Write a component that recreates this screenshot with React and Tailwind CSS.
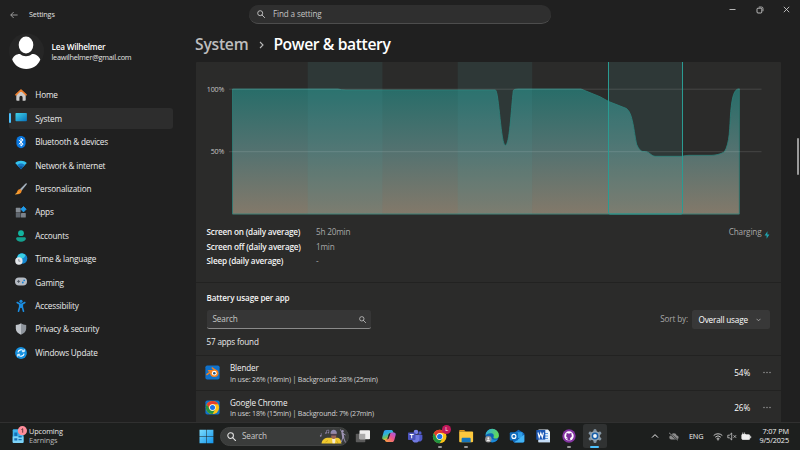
import React from "react";

const Svg = ({ w = 14, h = 14, children, className = "" }) => (
  <svg width={w} height={h} viewBox={`0 0 ${w} ${h}`} className={`block shrink-0 ${className}`} fill="none">
    {children}
  </svg>
);

const HomeIcon = () => (
  <Svg>
    <path d="M2.3 6.2 7 2l4.7 4.2V12a.8.8 0 0 1-.8.8H8.6V9.4a1.6 1.6 0 0 0-3.2 0v3.4H3.1a.8.8 0 0 1-.8-.8Z" fill="#c9c9c9" />
    <path d="M1.900 6.800 7 2l5.100 4.800" stroke="#ee7d2b" strokeWidth="1.600" strokeLinejoin="round" strokeLinecap="round" />
  </Svg>
);
const SystemIcon = () => (
  <Svg>
    <defs>
      <linearGradient id="sys" x1="0" y1="0" x2="1" y2="1">
        <stop stopColor="#41d3e8" />
        <stop offset="1" stopColor="#0873bd" />
      </linearGradient>
    </defs>
    <rect x="1.500" y="2" width="11.400" height="8.200" rx=".8" fill="url(#sys)" />
  </Svg>
);
const BluetoothIcon = () => (
  <Svg>
    <rect x="2.400" y="1" width="9.200" height="12.200" rx="4.600" fill="#0a78e0" />
    <path d="m4.800 4.900 4.300 4.300L7 11.100V3.200l2.100 1.900-4.300 4.200" stroke="#fff" strokeWidth="1" strokeLinejoin="round" />
  </Svg>
);
const NetworkIcon = () => (
  <Svg>
    <path d="M1.200 5.100C4.200 2 9.800 2 12.800 5.100L7 11.200Z" fill="#35c4ef" />
    <path d="M3 7C5.100 4.900 8.900 4.900 11 7l-4 4.200Z" fill="#1677c4" />
    <path d="M4.900 8.900C6 7.900 8 7.900 9.100 8.900L7 11.200Z" fill="#0c5494" />
  </Svg>
);
const BrushIcon = () => (
  <Svg>
    <path d="M12.600 1.200c.5.3.3.8 0 1.300L7.400 9 5.600 7.400l6-5.800c.3-.3.7-.6 1-.4Z" fill="#a4b0bd" />
    <path d="M5.500 7.300c1.500-.2 2.500 1 2 2.400-.6 2-3 2.700-6.200 2.500C3.600 11 2.600 8 5.500 7.300Z" fill="#f08a24" />
    <path d="M1.300 12.200c2.200-.7 3.300-1.500 4-2.700" stroke="#ffc54d" strokeWidth=".7" />
  </Svg>
);
const AppsIcon = () => (
  <Svg>
    <rect x="1.800" y="2.800" width="4.800" height="4.800" rx=".6" fill="#858c94" />
    <rect x="1.800" y="8" width="4.800" height="4.600" rx=".6" fill="#5f666e" />
    <rect x="7" y="8" width="4.800" height="4.600" rx=".6" fill="#7b828a" />
    <path d="M9.500 1.500 12.200 4.200 9.500 6.900 6.800 4.200Z" fill="#1f9bea" stroke="#1f9bea" strokeWidth=".8" strokeLinejoin="round" />
  </Svg>
);
const AccountsIcon = () => (
  <Svg>
    <circle cx="7" cy="4.200" r="2.900" fill="#12b5a0" />
    <path d="M3.600 8.200h6.800c.9 0 1.500.6 1.500 1.400 0 2-2.200 3.100-4.900 3.100S2.100 11.600 2.100 9.600c0-.8.6-1.400 1.500-1.400Z" fill="#14a18f" />
  </Svg>
);
const TimeIcon = () => (
  <Svg>
    <circle cx="8" cy="6.500" r="5.300" fill="#1486cf" />
    <path d="M4 3.200C6 .9 9.500 1 11.400 3 10.500 6.500 7 7.200 3 7.500Z" fill="#39cfe3" />
    <circle cx="4.900" cy="9" r="3.700" fill="#e3e6ea" />
    <path d="M4.800 7v2.200h1.600" stroke="#6d7580" strokeWidth=".7" />
  </Svg>
);
const GamingIcon = () => (
  <Svg>
    <rect x="1" y="2.600" width="12" height="8" rx="4" fill="#b6bbc3" />
    <path d="M4.600 4.900v3M3.100 6.400h3" stroke="#4c535d" strokeWidth=".9" />
    <circle cx="10.200" cy="5.300" r=".9" fill="#1783d6" />
    <circle cx="8.800" cy="7.500" r=".9" fill="#1783d6" />
  </Svg>
);
const AccessIcon = () => (
  <Svg>
    <circle cx="7" cy="2.300" r="1.600" fill="#1b8de0" />
    <path d="M3.200 3.500 5.700 5v3l-1.200 4.200M10.800 3.500 8.300 5v3l1.200 4.200" stroke="#1b8de0" strokeWidth="1.600" strokeLinecap="round" strokeLinejoin="round" />
    <path d="M5.400 4.500h3.200v4.400H5.400Z" fill="#1b8de0" />
  </Svg>
);
const ShieldIcon = () => (
  <Svg>
    <path d="M7 1.300c1.600 1.100 3.200 1.600 5.200 1.700v3.600c0 3-2 4.900-5.200 6.100Z" fill="#8f959d" />
    <path d="M7 1.300C5.400 2.400 3.800 2.900 1.800 3v3.600c0 3 2 4.900 5.200 6.100Z" fill="#bfc4ca" />
  </Svg>
);
const UpdateIcon = () => (
  <Svg>
    <circle cx="7" cy="7" r="5.900" fill="#1590df" />
    <path d="M3.900 6.400A3.200 3.200 0 0 1 9.700 5.200M10.100 7.600A3.200 3.200 0 0 1 4.300 8.800" stroke="#fff" strokeWidth="1.100" />
    <path d="M10.300 3.300v2.400H7.900M3.700 10.700V8.300h2.400" stroke="#fff" strokeWidth=".9" />
  </Svg>
);

const NAV = [
  ["Home", HomeIcon],
  ["System", SystemIcon],
  ["Bluetooth & devices", BluetoothIcon],
  ["Network & internet", NetworkIcon],
  ["Personalization", BrushIcon],
  ["Apps", AppsIcon],
  ["Accounts", AccountsIcon],
  ["Time & language", TimeIcon],
  ["Gaming", GamingIcon],
  ["Accessibility", AccessIcon],
  ["Privacy & security", ShieldIcon],
  ["Windows Update", UpdateIcon],
];

const SearchGlyph = ({ size = 8, color = "#c8c8c8", sw = 0.9 }) => (
  <svg width={size} height={size} viewBox="0 0 8 8" fill="none" stroke={color} strokeWidth={sw} className="block shrink-0">
    <circle cx="3.200" cy="3.200" r="2.500" />
    <path d="M5 5 7.600 7.600" strokeLinecap="round" />
  </svg>
);

function TitleBar() {
  return (
    <header className="flex h-7 shrink-0 items-start">
      <div className="flex h-[29px] w-[249px] items-center pl-[10px]">
        <Svg w={8} h={8}>
          <path d="M7.600 4H.8M3.700 1 .7 4l3 3" stroke="#b5b5b5" strokeWidth=".8" />
        </Svg>
        <span className="ml-[11px] text-[7.200px] tracking-[-0.120px] text-[#e2e2e2]">Settings</span>
      </div>
      <div className="mt-[5px] flex h-[19px] w-[302px] items-center overflow-hidden rounded-full border-b border-[#4d4d4d] bg-[#2f2f2f] pl-[8px]">
        <SearchGlyph />
        <span className="ml-[8px] pt-[1px] text-[8.100px] tracking-[-0.130px] text-[#c4c4c4]">Find a setting</span>
      </div>
      <div className="ml-[178px] flex h-[19px] items-center gap-[19.500px]">
        <Svg w={7} h={7}><path d="M.5 3.500h6" stroke="#ddd" strokeWidth=".8" /></Svg>
        <Svg w={8} h={8}>
          <rect x="1" y="2.200" width="4.800" height="4.800" rx="1" stroke="#ddd" strokeWidth=".8" />
          <path d="M2.800 1h2.700A1.500 1.500 0 0 1 7 2.500v2.700" stroke="#ddd" strokeWidth=".7" />
        </Svg>
        <Svg w={7} h={7}><path d="m.8.800 5.400 5.400M6.200.800.800 6.200" stroke="#ddd" strokeWidth=".8" /></Svg>
      </div>
    </header>
  );
}

function Sidebar() {
  return (
    <aside className="flex w-[196px] shrink-0 flex-col pl-[9px]">
      <div className="flex h-[55.300px] items-start pt-[5px]">
        <Svg w={36} h={36}>
          <circle cx="17.500" cy="18" r="17.500" fill="#262626" />
          <ellipse cx="17" cy="12" rx="7.300" ry="8.400" fill="#fff" />
          <path d="M3.200 26.500c1-3.600 4.300-5.700 7.800-5.600 3.400 3 8.600 3 12 0 3.700 0 7 2 8.300 5.600C28.800 32.500 24 36 17.300 36S5.800 32.500 3.200 26.500Z" fill="#fff" />
        </Svg>
        <div className="ml-[6.500px] mt-[9px] leading-[10.400px]">
          <div className="text-[8.200px] font-semibold tracking-[-0.220px] text-white">Lea Wilhelmer</div>
          <div className="text-[7.300px] tracking-[-0.240px] text-[#e4e4e4]">leawilhelmer@gmail.com</div>
        </div>
      </div>
      <nav className="flex flex-col">
        {NAV.map(([label, Icon]) => (
          <div key={label} className="flex h-[23.430px] items-center">
            <div className={`flex h-[21px] w-[164px] items-center rounded-[3px] ${label === "System" ? "bg-[#2d2d2d]" : ""}`}>
              <span className={`h-[10px] w-[1.600px] rounded-full ${label === "System" ? "bg-[#4cc2ff]" : ""}`} />
              <span className="ml-[3.400px]"><Icon /></span>
              <span className="ml-[7.300px] pt-[0.800px] text-[8.200px] tracking-[-0.180px] text-[#ececec]">{label}</span>
            </div>
          </div>
        ))}
      </nav>
    </aside>
  );
}

const CURVE =
  "M232.500 89H338q3 1 8 1H495.500C499 92 501 145.300 505.300 145.300S511 110 513.300 90.500Q513.700 89 518 89H581L600 96.700 608.700 101.500 626 108.300C633 112 634 133 636.700 144.300 638.500 149 641 151.300 643 151.500 647 151.300 648 152 651 154.500Q653 156.300 655 156.300H682.300Q685 155.300 689 155.300H712C718 155 721 153.500 724.300 152 730 143 729.500 127 730.700 111.700 732 97 734 88.800 739.300 88.800";

function Chart() {
  return (
    <svg width="585" height="158" viewBox="196 62 585 158" fill="none" className="block shrink-0">
      <defs>
        <linearGradient id="area" gradientUnits="userSpaceOnUse" x1="0" y1="89" x2="0" y2="214">
          <stop stopColor="#286d69" />
          <stop offset=".5" stopColor="#547270" />
          <stop offset="1" stopColor="#83796a" />
        </linearGradient>
      </defs>
      <path d={`${CURVE}V214.300H232.500Z`} fill="url(#area)" />
      <path d={`${CURVE}V214H232.500V89`} stroke="#2c8079" strokeWidth=".8" />
      <g fill="#4aa6a6" fillOpacity=".11">
        <rect x="307.700" y="62" width="74.700" height="152" />
        <rect x="457.700" y="62" width="74.500" height="152" />
        <rect x="608.500" y="62" width="74" height="152" />
      </g>
      <path d="M229 89.200h532.500M229 151.700h532.500" stroke="#fff" strokeOpacity=".13" />
      <path d="M608.500 62v150.500q0 1.500 1.500 1.500h71q1.500 0 1.500-1.500V62" stroke="#2a9b92" />
      <g fill="#c4c4c4" fontSize="7.100" letterSpacing="-.12" textAnchor="end">
        <text x="224.300" y="91.600">100%</text>
        <text x="224.300" y="154.200">50%</text>
      </g>
    </svg>
  );
}

const AppTile = ({ children }) => (
  <svg width="15" height="15" viewBox="0 0 15 15" className="block shrink-0" fill="none">
    <rect x=".4" y=".4" width="14.200" height="14.200" rx="1.800" fill="#0f72cc" />
    {children}
  </svg>
);

const ChromeShape = ({ cx, cy, r }) => (
  <g transform={`translate(${cx} ${cy}) scale(${r / 6})`}>
    <circle r="6" fill="#fbc116" />
    <path d="M-5.200-3A6 6 0 0 1 5.200-3H0A3 3 0 0 0-2.600 1.500Z" fill="#e33b2e" />
    <path d="M-5.200-3A6 6 0 0 0 0 6L2.600 1.500A3 3 0 0 1-2.600 1.500Z" fill="#229342" />
    <circle r="2.900" fill="#fff" />
    <circle r="2.300" fill="#1a73e8" />
  </g>
);

const BlenderTile = () => (
  <AppTile>
    <path d="M7.200 2.900 10.800 5.600M3.500 5.700h6M1.900 9.600 6 6.500" stroke="#f58220" strokeWidth="1.400" strokeLinecap="round" />
    <ellipse cx="9.300" cy="8.300" rx="4.200" ry="3.700" fill="#f58220" />
    <circle cx="9.300" cy="8.200" r="2.400" fill="#fff" />
    <circle cx="9.300" cy="8.200" r="1.300" fill="#265787" />
  </AppTile>
);
const ChromeTile = () => (
  <AppTile>
    <ChromeShape cx={7.500} cy={7.500} r={6.600} />
  </AppTile>
);

function AppRow({ icon, name, detail, pct }) {
  return (
    <div className="flex h-[34.400px] shrink-0 items-center border-t border-[#222221] pl-[9px] pr-[10px]">
      {icon}
      <div className="ml-[10px] flex-1 pt-[1.300px]">
        <div className="text-[8.100px] leading-[10px] tracking-[-0.130px] text-[#f2f2f2]">{name}</div>
        <div className="mt-[0.500px] text-[7.100px] leading-[10px] tracking-[-0.190px] text-[#d2d2d2]">{detail}</div>
      </div>
      <span className="mr-[13px] pt-[1.200px] text-[8.200px] font-medium tracking-[-0.150px] text-white">{pct}</span>
      <Svg w={8} h={3}>
        <g fill="#a5a5a5"><circle cx="1" cy="1.500" r=".7" /><circle cx="4" cy="1.500" r=".7" /><circle cx="7" cy="1.500" r=".7" /></g>
      </Svg>
    </div>
  );
}

function Panel() {
  return (
    <section className="flex h-[359.500px] w-[585px] shrink-0 flex-col overflow-hidden rounded-t-[1px] bg-[#2b2b2a]">
      <Chart />
      <div className="flex h-[61.500px] shrink-0 justify-between pl-[10.500px] pr-[11.500px] pt-[4.800px] text-[8.200px] leading-[14.700px]">
        <div className="grid grid-cols-[109.500px_auto] content-start">
          {[["Screen on (daily average)", "5h 20min"], ["Screen off (daily average)", "1min"], ["Sleep (daily average)", "-"]].map(([k, v]) => (
            <React.Fragment key={k}>
              <span className="font-semibold tracking-[-0.200px] text-[#f4f4f4]">{k}</span>
              <span className="tracking-[-0.200px] text-[#a8a8a8]">{v}</span>
            </React.Fragment>
          ))}
        </div>
        <div className="flex h-[15px] items-center tracking-[-0.150px] text-[#a8a8a8]">
          Charging
          <Svg w={6} h={8} className="ml-[2px] mt-[5px]"><path d="M3.500.300.600 4.500h2v3.300l2.800-4.300H3.300Z" fill="#1fa5b0" /></Svg>
        </div>
      </div>
      <div className="flex h-[73.800px] shrink-0 items-start justify-between border-t border-[#222221] pl-[10.500px] pr-[11px]">
        <div className="w-[164px]">
          <h2 className="pt-[9.500px] text-[8.100px] font-semibold leading-[12px] tracking-[-0.150px] text-[#f4f4f4]">Battery usage per app</h2>
          <div className="mt-[6px] flex h-[19px] items-center justify-between rounded-[2.500px] border-b border-[#8a8a8a] bg-[#363636] pl-[6px] pr-[5px]">
            <span className="pt-[1px] text-[8.200px] tracking-[-0.150px] text-[#c6c6c6]">Search</span>
            <SearchGlyph size={7} />
          </div>
          <div className="mt-[6.800px] text-[8.100px] leading-[12px] tracking-[-0.150px] text-[#ececec]">57 apps found</div>
        </div>
        <div className="mt-[27.500px] flex h-[19px] items-center">
          <span className="text-[8.100px] tracking-[-0.130px] text-[#a8a8a8]">Sort by:</span>
          <div className="ml-[4px] flex h-[19px] w-[78px] items-center justify-between rounded-[2.500px] bg-[#383838] pl-[6.500px] pr-[9px]">
            <span className="pt-[0.500px] text-[8.200px] font-medium tracking-[-0.180px] text-white">Overall usage</span>
            <Svg w={5} h={4}><path d="m.5.800 2 2 2-2" stroke="#b5b5b5" strokeWidth=".8" /></Svg>
          </div>
        </div>
      </div>
      <AppRow icon={<BlenderTile />} name="Blender" detail="In use: 26% (16min) | Background: 28% (25min)" pct="54%" />
      <AppRow icon={<ChromeTile />} name="Google Chrome" detail="In use: 18% (15min) | Background: 7% (27min)" pct="26%" />
    </section>
  );
}

const T = ({ children }) => <Svg w={16} h={16}>{children}</Svg>;

const TaskView = () => (
  <T>
    <rect x=".8" y="5.800" width="9.500" height="8.500" rx=".8" fill="#5b5b5b" />
    <rect x="4.500" y="2.200" width="10.500" height="9" rx=".8" fill="#eeeeee" />
    <path d="M4.500 5.800h5.800v5.400H4.500Z" fill="#aaaaaa" />
  </T>
);
const Copilot = () => (
  <T>
    <defs>
      <linearGradient id="cpa" x1="0" y1="0" x2=".4" y2="1"><stop stopColor="#2f8ff5" /><stop offset=".45" stopColor="#2fb4d8" /><stop offset=".75" stopColor="#6cc060" /><stop offset="1" stopColor="#f2c230" /></linearGradient>
      <linearGradient id="cpb" x1="1" y1="0" x2=".2" y2="1"><stop stopColor="#9a5cf0" /><stop offset=".5" stopColor="#e8528f" /><stop offset="1" stopColor="#fb9a45" /></linearGradient>
    </defs>
    <path d="M5 2h5.200c1 0 1.500.6 1.800 1.400l.5 1.600H9.800C8.600 5 8 5.600 7.700 6.700L6.500 10.500c-.3.900-.7 1.400-1.600 1.400H3.200c-1.600 0-2.400-1-1.900-2.800L2.600 4.300C3 2.800 3.700 2 5 2Z" fill="url(#cpa)" />
    <path d="M11 14H5.800c-1 0-1.500-.6-1.800-1.400L3.700 11.500h2c1.300 0 1.900-.6 2.200-1.700L9.200 5.800c.3-.9.900-1.400 1.800-1.400h1.700c1.600 0 2.400 1 1.900 2.800l-1.200 4.500C13 13.200 12.300 14 11 14Z" fill="url(#cpb)" />
    <path d="m8.400 5.800-1.400 4.600" stroke="#262626" strokeWidth="1" />
  </T>
);
const Teams = () => (
  <T>
    <circle cx="9" cy="4" r="2.300" fill="#7b83eb" />
    <circle cx="13" cy="4.900" r="1.600" fill="#5059c9" />
    <path d="M10.500 6.800h4.200c.4 0 .7.300.7.700v3.200a3 3 0 0 1-3.800 2.700Z" fill="#5059c9" />
    <path d="M5 6.800h7.400v4.100c0 2.300-1.700 3.700-3.700 3.700S5 13.200 5 10.900Z" fill="#7079e0" />
    <rect x="1" y="4.500" width="7.500" height="7.500" rx=".7" fill="#4b53bc" />
    <path d="M2.700 6.500h4M4.700 6.500V10.300" stroke="#fff" strokeWidth="1" />
  </T>
);
const Chrome = () => (
  <T>
    <ChromeShape cx={7.700} cy={8.500} r={6.800} />
  </T>
);
const Folder = () => (
  <T>
    <path d="M1.200 3.200c0-.7.400-1.200 1.100-1.200h3.900l1.500 1.500H1.200Z" fill="#e59a18" />
    <path d="M1.200 3.500h13c.5 0 .9.400.9.900v8.900c0 .5-.4.900-.9.900H2.100c-.5 0-.9-.4-.9-.9Z" fill="#fdc93d" />
    <path d="M3.600 14.200v-3.300c0-.7.500-1.200 1.200-1.200h6.700c.7 0 1.200.5 1.200 1.200v3.300Z" fill="#1676bd" />
  </T>
);
const Edge = () => (
  <T>
    <defs>
      <linearGradient id="ed" x1="0" y1="0" x2="1" y2=".3"><stop stopColor="#28a8ea" /><stop offset="1" stopColor="#62d957" /></linearGradient>
    </defs>
    <circle cx="8.200" cy="7.700" r="6.700" fill="#0d62b5" />
    <path d="M1.500 7.500A6.700 6.700 0 0 1 14.900 7.400c0 2-1.500 3.200-3.200 3.200-1.500 0-2.500-.6-2.300-1.400.8-1 .6-3.600-2-3.900C4.500 5 2.300 6.300 1.500 7.500Z" fill="url(#ed)" />
    <path d="M7 8.200c0 3.200 3 4.300 6.800 3.100-.7 1.300-3 2.900-5.600 2.900-2.700 0-4-3.500-1.200-6Z" fill="#1b8bd8" />
    <circle cx="4.300" cy="11.200" r="3.200" fill="#929292" />
    <circle cx="4.300" cy="10.300" r="1" fill="#eee" />
    <path d="M2.500 13.200c.2-2.200 3.400-2.200 3.600 0Z" fill="#eee" />
  </T>
);
const Outlook = () => (
  <T>
    <path d="M4 5.500 9.500 1.800 15.300 5.500v7.800c0 .7-.5 1.200-1.200 1.200H5.700c-.7 0-1.700-.5-1.700-1.200Z" fill="#1265b8" />
    <path d="M6 4.200h7.500V10H6Z" fill="#2f9fe8" />
    <path d="m5 14.500 10.300-8V13.300c0 .7-.5 1.200-1.200 1.200Z" fill="#42b4f5" />
    <rect x=".8" y="4.300" width="8.200" height="8.200" rx="1" fill="#0f6cbd" />
    <circle cx="4.900" cy="8.400" r="2" stroke="#fff" strokeWidth="1.100" />
  </T>
);
const Word = () => (
  <T>
    <path d="M3.500 1.500h9.500L15 3.800v10.400H3.500Z" fill="#e8f1fb" />
    <path d="M10 5.500h3M10 8h3M10 10.500h3" stroke="#4a8fdd" strokeWidth=".9" />
    <rect x="1.300" y="2" width="9" height="9.800" rx=".5" fill="#1b57b5" />
    <path d="m3 4.500 1.200 5L5.800 5l1.500 4.500 1.200-5" stroke="#fff" strokeWidth="1.100" />
    <path d="M3.500 11.800H15v2.400H3.500Z" fill="#c4dcf5" />
  </T>
);
const GitHub = () => (
  <T>
    <circle cx="8" cy="8" r="6.700" fill="#8534a3" />
    <circle cx="8" cy="8" r="4.700" fill="#fff" />
    <path d="m5.700 4.800 1.300.7h2l1.300-.7.200 1.700c.9 1.700 0 3.100-1.500 3.500.3.500.3 1.200.3 2.500H6.700v-1.200c-1 .1-1.300-.5-1.600-1l1.600.1c0-.2.100-.3.200-.4-1.400-.4-2.300-1.800-1.400-3.500Z" fill="#7a2c98" />
  </T>
);
const Gear = () => (
  <T>
    <g stroke="#8495a3" strokeWidth="3.200" strokeLinecap="round">
      <path d="M8 2.500v11M3.200 5.200l9.600 5.600M3.200 10.800l9.600-5.600" />
    </g>
    <circle cx="8" cy="8" r="4.900" fill="#94a4b1" />
    <circle cx="8" cy="8" r="3.400" fill="#175ea8" />
    <circle cx="8" cy="8" r="1.900" fill="#f2f7fb" />
  </T>
);

const TASKS = [
  { id: "taskview", Icon: TaskView },
  { id: "copilot", Icon: Copilot },
  { id: "teams", Icon: Teams },
  { id: "chrome", Icon: Chrome, running: true, badge: "L" },
  { id: "folder", Icon: Folder, running: true },
  { id: "edge", Icon: Edge },
  { id: "outlook", Icon: Outlook },
  { id: "word", Icon: Word },
  { id: "github", Icon: GitHub, running: true },
  { id: "settings", Icon: Gear, active: true },
];

const SearchArt = () => (
  <Svg w={28} h={16}>
    <path d="M2.500 15.500C3 11.500 6 9.500 10.500 9.800h8C21.500 10.500 22 12.500 22.500 15.500Z" fill="#f0c92f" />
    <path d="M6.500 14 9 12.500M17.500 12.500l1.500 2.500" stroke="#b98e16" strokeWidth=".6" />
    <path d="M13 10.500h3.500l-.5 4.800h-2.500Z" fill="#f6ecd0" />
    <path d="M12.200 5h5v3.500c0 1.300-1 2.500-2.500 2.500s-2.500-1.200-2.500-2.500Z" fill="#9c6655" />
    <path d="M11.500 5.800c-.3-5.500 6.700-5.500 6.400 0Z" fill="#9088ad" />
    <path d="M12 6.200h5.300v1.300H12Z" fill="#3a3450" />
    <path d="M2.300 7.800V5.200M7.500 5V2.500l2.300-.4v2.500" stroke="#978cb3" strokeWidth=".6" />
    <circle cx="1.700" cy="7.900" r=".8" fill="#978cb3" />
    <circle cx="6.900" cy="5.100" r=".8" fill="#978cb3" />
    <circle cx="9.300" cy="4.700" r=".7" fill="#978cb3" />
    <circle cx="23.700" cy="3.200" r="1.100" fill="#a096b8" />
    <path d="m23.500 5.200.8 4.300" stroke="#a096b8" strokeWidth="2" strokeLinecap="round" />
    <path d="m23.300 5.200-1.600-3.400M24 5.500l2.200 1.300M23.900 9.500l-1.600 4.300M24.600 9.500l1.700 4.600" stroke="#a096b8" strokeWidth=".9" strokeLinecap="round" />
  </Svg>
);

function Taskbar() {
  return (
    <footer className="flex h-[28.500px] shrink-0 items-center border-t border-[#303030] bg-[#1d1f1e]">
      <div className="flex w-[198.500px] items-center pl-[12px]">
        <Svg w={16} h={18} className="-mt-[2px]">
          <rect x=".7" y="3.300" width="10.800" height="13.700" rx="1" fill="#3cb3ee" />
          <path d="M.7 10.500h10.800V16a1 1 0 0 1-1 1H1.700a1 1 0 0 1-1-1Z" fill="#7ed3f7" />
          <path d="M2.300 12.200h3v2.300h-3ZM6.500 10h3.200v1.500H6.500ZM6.500 13h3.200v1.300H6.500ZM2.300 6.500h3V10h-3Z" fill="#1470b8" />
          <circle cx="10.400" cy="4.700" r="4.600" fill="#ff8d9b" />
          <path d="m9.400 3.600 1.300-.9v4" stroke="#40232a" strokeWidth=".8" />
        </Svg>
        <div className="ml-[1px] text-[7.300px] leading-[9.300px] tracking-[-0.120px]">
          <div className="text-[#e8e8e8]">Upcoming</div>
          <div className="text-[#b9b9b9]">Earnings</div>
        </div>
      </div>
      <Svg w={15} h={15}>
        <defs>
          <linearGradient id="win" x1="0" y1="0" x2="1" y2="1"><stop stopColor="#7bdcfd" /><stop offset="1" stopColor="#1295ec" /></linearGradient>
        </defs>
        <path d="M.5.800h6.700v6.500H.5ZM7.700.800h6.700v6.500H7.700ZM.5 7.800h6.700v6.500H.5ZM7.700 7.800h6.700v6.500H7.700Z" fill="url(#win)" />
      </Svg>
      <div className="ml-[6.500px] flex h-[19px] w-[129px] items-center rounded-full border border-[#424443] bg-[#3a3c3b] pl-[6px]">
        <SearchGlyph size={9} color="#e6e6e6" sw={0.9} />
        <span className="ml-[6px] text-[8.100px] tracking-[-0.130px] text-[#c9c9c9]">Search</span>
        <span className="ml-auto mr-[1px]"><SearchArt /></span>
      </div>
      <div className="ml-[1.500px] flex h-full items-center">
        {TASKS.map(({ id, Icon, running, badge, active }) => (
          <div key={id} className="flex h-full w-[25.700px] items-center justify-center">
            <div className={`relative flex h-[24px] w-[24px] items-center justify-center rounded-[2.500px] ${active ? "bg-[#303232]" : ""}`}>
              <Icon />
              {badge && (
                <span className="absolute right-[1.500px] top-[1px] flex h-[8.500px] w-[8.500px] items-center justify-center rounded-full bg-[#c2185b] text-[5.500px] leading-none text-white">{badge}</span>
              )}
              {running && <span className="absolute bottom-[0.500px] h-[1.500px] w-[4px] rounded-full bg-[#9a9a9a]" />}
              {active && <span className="absolute bottom-[0.500px] h-[1.700px] w-[9px] rounded-full bg-[#4cc2ff]" />}
            </div>
          </div>
        ))}
      </div>
      <div className="ml-auto flex items-center pr-[11px] text-[7.300px] tracking-[-0.100px] text-[#f0f0f0]">
        <Svg w={8} h={6}><path d="m1 4.600 3-3 3 3" stroke="#f0f0f0" strokeWidth="1" /></Svg>
        <Svg w={11} h={9} className="ml-[9px]">
          <path d="M3 7.500h5.500a2 2 0 0 0 .2-4 3 3 0 0 0-5.700-.3A2.200 2.200 0 0 0 3 7.500Z" fill="#8c8c8c" />
          <path d="m1 .8 9 7.500" stroke="#1d1f1e" strokeWidth="1.700" />
          <path d="m1 .8 9 7.500" stroke="#b5b5b5" strokeWidth=".7" />
        </Svg>
        <span className="ml-[10px] w-[14px] tracking-[-0.200px]">ENG</span>
        <Svg w={10} h={9} className="ml-[10px]">
          <path d="M.7 3.500a6.200 6.200 0 0 1 8.600 0M2.200 5.200a4 4 0 0 1 5.600 0M3.600 6.700a2 2 0 0 1 2.800 0" stroke="#f0f0f0" strokeWidth=".8" />
          <circle cx="5" cy="7.700" r=".7" fill="#f0f0f0" />
        </Svg>
        <Svg w={10} h={9} className="ml-[3.500px]">
          <path d="M.8 3.200h1.600L4.700 1v7L2.400 5.800H.8Z" stroke="#e0e0e0" strokeWidth=".7" strokeLinejoin="round" />
          <path d="m6.500 3.200 2.600 2.600M9.100 3.200 6.500 5.800" stroke="#e0e0e0" strokeWidth=".7" />
        </Svg>
        <Svg w={11} h={9} className="ml-[4px]">
          <rect x=".8" y="2.700" width="8" height="4.800" rx="1" fill="#f0f0f0" stroke="#f0f0f0" strokeWidth=".7" />
          <path d="M9.700 4.200v1.800" stroke="#f0f0f0" strokeWidth=".9" />
          <path d="M1.800.500v2M3.600.500v2M1 2.400h3.600v1.200q-1.800 2-3.600 0Z" stroke="#f0f0f0" strokeWidth=".7" fill="#f0f0f0" />
        </Svg>
        <div className="ml-[8.500px] w-[29px] text-right leading-[9.400px] whitespace-nowrap">
          <div className="flex justify-end">7:07 PM</div>
          <div className="flex justify-end">9/5/2025</div>
        </div>
      </div>
    </footer>
  );
}

export default function App() {
  return (
    <div className="flex h-[450px] w-[800px] flex-col overflow-hidden bg-[#202020] font-['Open_Sans','Noto_Sans',sans-serif] whitespace-nowrap">
      <TitleBar />
      <div className="flex h-[393.500px] shrink-0">
        <Sidebar />
        <main className="flex w-[604px] flex-col">
          <h1 className="flex h-[34px] shrink-0 items-center text-[15.700px] font-semibold tracking-[-0.250px]">
            <span className="-ml-px text-[#bdbdbd]">System</span>
            <Svg w={6} h={8} className="ml-[10.500px] mr-[8.500px]"><path d="m1 1 3 3-3 3" stroke="#b8b8b8" strokeWidth="1.100" /></Svg>
            <span className="tracking-[-0.400px] text-white">Power &amp; battery</span>
          </h1>
          <div className="flex">
            <Panel />
            <div className="ml-[16px] mt-[76px] h-[37px] w-[1.500px] rounded-full bg-[#9a9a9a]" />
          </div>
        </main>
      </div>
      <Taskbar />
    </div>
  );
}
